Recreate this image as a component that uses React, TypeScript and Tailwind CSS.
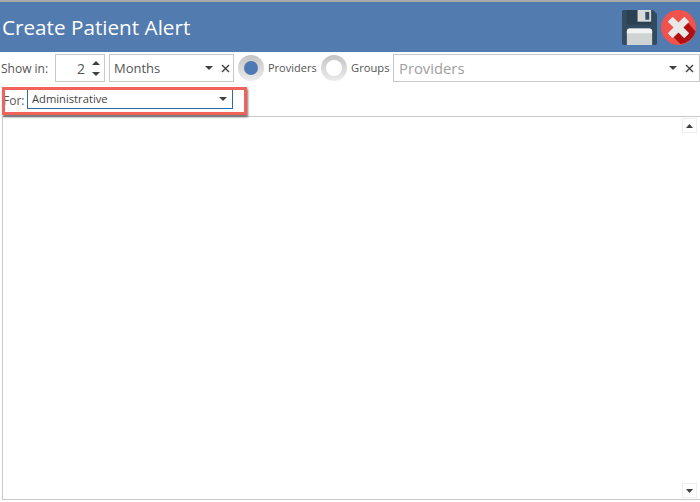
const font = "font-['Open_Sans','Noto_Sans',sans-serif]";

function Caret({ className = "" }: { className?: string }) {
  return (
    <svg width="8" height="4" viewBox="0 0 8 4" className={className}>
      <path d="M0 0H8L4 4Z" fill="#404040" />
    </svg>
  );
}

function Cross() {
  return (
    <svg width="9" height="9" viewBox="0 0 9 9">
      <path d="M1 1L8 8M8 1L1 8" stroke="#404040" strokeWidth="1.4" />
    </svg>
  );
}

function SaveIcon() {
  return (
    <svg width="35" height="35" viewBox="0 0 36 36" className="shrink-0">
      <path d="M2 0H32L36 4V34a2 2 0 0 1-2 2H2a2 2 0 0 1-2-2V2a2 2 0 0 1 2-2Z" fill="#324b5e" />
      <path d="M5 0H31V13a2 2 0 0 1-2 2H7a2 2 0 0 1-2-2Z" fill="#2b4050" />
      <rect x="16" y="0" width="14" height="12" fill="#d6dadb" />
      <rect x="24" y="2" width="4" height="8" fill="#324b5e" />
      <path d="M5 36V22a3 3 0 0 1 3-3H28a3 3 0 0 1 3 3V36Z" fill="#cfd3d4" />
      <path d="M5 36V22a3 3 0 0 1 3-3H28a3 3 0 0 1 3 3V24H5Z" fill="#f1f2f2" />
    </svg>
  );
}

function CloseIcon() {
  return (
    <svg width="35" height="35" viewBox="0 0 36 36" className="shrink-0 ml-[4px]">
      <circle cx="18" cy="18" r="18" fill="#f0524e" />
      <path d="M10 25L20 35A18 18 0 0 0 35.500 22L25 10Z" fill="#b01010" />
      <path d="M12 8L18 14L24 8L28 12L22 18L28 24L24 28L18 22L12 28L8 24L14 18L8 12Z" fill="#e8e8e8" stroke="#e8e8e8" strokeWidth="1.500" strokeLinejoin="round" />
    </svg>
  );
}

function Radio({ selected }: { selected: boolean }) {
  return (
    <div className="w-[26px] h-[26px] rounded-full bg-gradient-to-b from-[#c4c4c4] to-[#ececec] flex items-center justify-center shrink-0">
      <div className={selected ? "w-[14px] h-[14px] rounded-full bg-[#4f79b3]" : "w-[16px] h-[16px] rounded-full bg-white"} />
    </div>
  );
}

export default function App() {
  return (
    <div className={`w-[700px] h-[502px] bg-white flex flex-col overflow-hidden text-[#555] ${font}`}>
      <div className="h-[2px] bg-[#a9a9a5] shrink-0" />
      <div className="h-[50px] bg-[#527bb0] flex items-center justify-between pl-[2px] pr-[4px] shrink-0">
        <span className="text-white text-[20.700px] leading-none">Create Patient Alert</span>
        <div className="flex items-center">
          <SaveIcon />
          <CloseIcon />
        </div>
      </div>
      <div className="h-[28px] mt-[2px] flex items-center shrink-0 text-[12px]">
        <span className="w-[55px] pl-[1px] pt-[1px] shrink-0">Show in:</span>
        <div className="w-[50px] h-[28px] border border-[#c8c8c8] flex items-center justify-end shrink-0 pr-[4px]">
          <span className="text-[14px] mr-[7px] pt-[1px]">2</span>
          <div className="flex flex-col gap-[7px]">
            <svg width="8" height="4" viewBox="0 0 8 4"><path d="M0 4H8L4 0Z" fill="#404040" /></svg>
            <Caret />
          </div>
        </div>
        <div className="w-[125px] h-[28px] ml-[4px] border border-[#c8c8c8] flex items-center pl-[4px] pr-[3px] shrink-0">
          <span className="text-[13px] flex-1 pt-[1px]">Months</span>
          <Caret className="mr-[8px]" />
          <Cross />
        </div>
        <div className="ml-[4px]"><Radio selected /></div>
        <span className="ml-[4px] w-[53px] shrink-0 text-[11px]">Providers</span>
        <Radio selected={false} />
        <span className="ml-[4px] text-[11.200px] w-[42px] shrink-0">Groups</span>
        <div className="flex-1 h-[28px] border border-[#c8c8c8] flex items-center pl-[5px] pr-[5px]">
          <span className="text-[14.800px] text-[#a0a0a0] flex-1">Providers</span>
          <Caret className="mr-[8px]" />
          <Cross />
        </div>
      </div>
      <div className="relative h-[25px] mt-[5px] flex items-start shrink-0 text-[12px]">
        <span className="pl-[3px] w-[27px] shrink-0 mt-[5px]">For:</span>
        <div className="w-[206px] h-[20px] mt-[2px] border border-t-0 border-[#2a6aa8] flex items-center pl-[4px] pr-[5px]">
          <span className="flex-1 text-[11.200px] text-[#444] pt-[2px]">Administrative</span>
          <Caret />
        </div>
        <div className="absolute left-[2px] top-0 w-[245px] h-[28px] border-[3px] border-[#f0625a] shadow-[1px_2px_2px_rgba(0,0,0,0.55)]" />
      </div>
      <div className="ml-[2px] mt-[4px] h-[384px] border-t border-l border-b border-[#c8c8c8] flex flex-col items-end justify-between shrink-0 pr-[3px] pt-[1px] pb-[1px]">
        <div className="w-[15px] h-[15px] border border-[#eeeeee] flex items-center justify-center">
          <svg width="7" height="4" viewBox="0 0 7 4"><path d="M0 4H7L3.500 0Z" fill="#404040" /></svg>
        </div>
        <div className="w-[15px] h-[15px] border border-[#eeeeee] flex items-center justify-center">
          <svg width="7" height="4" viewBox="0 0 7 4"><path d="M0 0H7L3.500 4Z" fill="#404040" /></svg>
        </div>
      </div>
    </div>
  );
}
